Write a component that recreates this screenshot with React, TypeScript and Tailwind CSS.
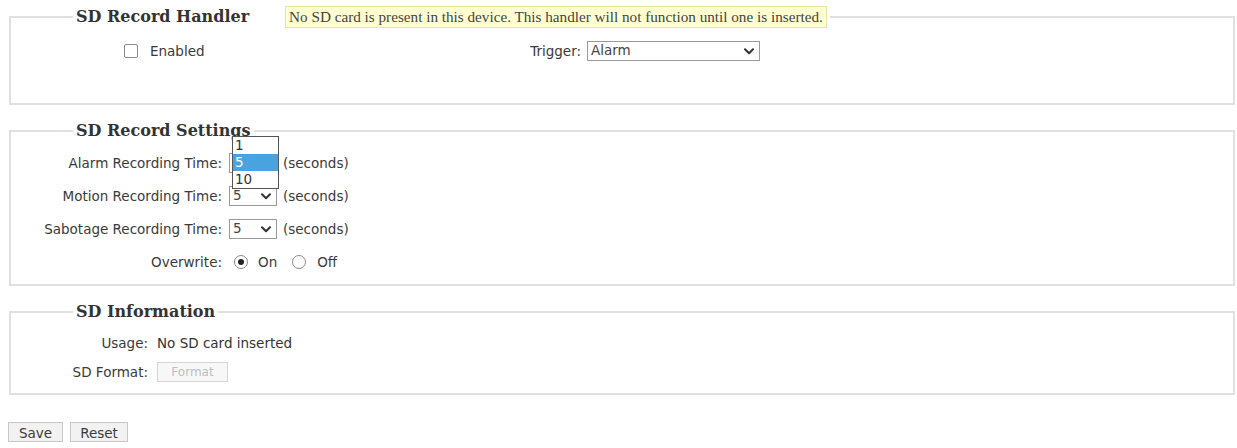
import React from "react"

const sans = "font-['DejaVu_Sans',Verdana,sans-serif]"

// little down-arrow used by the fake select boxes
const Chevron = ({ className = "" }: { className?: string }) => (
    <svg viewBox="0 0 10 7" className={className} fill="none">
        <polyline points="1,1.2 5,5.2 9,1.2" stroke="#333" strokeWidth="2" strokeLinecap="round" strokeLinejoin="round" />
    </svg>
)

const Select = ({ value, className = "", children }: { value: string; className?: string; children?: React.ReactNode }) => (
    <div className={`relative flex items-center h-[20px] border border-[#9a9a9a] bg-white pl-[3px] pr-[5px] ${className}`}>
        <span className="flex-1 leading-none text-[#444]">{value}</span>
        <Chevron className="w-[10px] h-[7px]" />
        {children}
    </div>
)

const Legend = ({ children }: { children: React.ReactNode }) => (
    <legend className="ml-[62px] px-[3px] font-['DejaVu_Serif',Georgia,serif] font-bold text-[16px] leading-[20px] text-[#333]">
        {children}
    </legend>
)

const Radio = ({ checked }: { checked?: boolean }) => (
    <span className="inline-flex items-center justify-center w-[14px] h-[14px] rounded-full border border-[#8a8a8a] bg-white">
        {checked && <span className="w-[6px] h-[6px] rounded-full bg-[#222]" />}
    </span>
)

const TimeRow = ({ label, children }: { label: string; children: React.ReactNode }) => (
    <div className="flex items-center h-[20px]">
        <span className="w-[211px] text-right text-[#3a3a3a]">{label}</span>
        {children}
    </div>
)

export default function App() {
    return (
        <div className={`w-[1237px] h-[448px] bg-white pt-[6px] pl-[8px] pr-[2px] ${sans} text-[13.5px] text-[#333]`}>
            {/* handler */}
            <fieldset className="ml-px border-2 border-[#e0e0e0]">
                <legend className="ml-[62px] px-[3px]">
                    <div className="flex items-center">
                        <span className="font-['DejaVu_Serif',Georgia,serif] font-bold text-[16px] leading-[20px] text-[#333]">
                            SD Record Handler
                        </span>
                        <span className="ml-[36px] h-[22px] px-[3px] flex items-center border border-[#e4e6a8] bg-[#ffffd0] font-['Liberation_Serif','Times_New_Roman',serif] text-[15.2px] text-[#444]">
                            No SD card is present in this device. This handler will not function until one is inserted.
                        </span>
                    </div>
                </legend>
                <div className="h-[75px] pt-[13px]">
                    <div className="flex items-center h-[20px]">
                        <div className="w-[470px] pl-[113px] flex items-center">
                            <span className="w-[14px] h-[14px] rounded-[2px] border border-[#8a8a8a] bg-white" />
                            <span className="ml-[12px] text-[#3a3a3a]">Enabled</span>
                        </div>
                        <span className="w-[106px] pr-[6px] text-right text-[#3a3a3a]">Trigger:</span>
                        <Select value="Alarm" className="w-[173px]" />
                    </div>
                </div>
            </fieldset>

            {/* recording settings */}
            <fieldset className="ml-px mt-[16px] border-2 border-[#e0e0e0]">
                <Legend>SD Record Settings</Legend>
                <div className="flex flex-col gap-[13px] pt-[12px] pb-[12px]">
                    <TimeRow label="Alarm Recording Time:">
                        <Select value="5" className="ml-[7px] w-[48px]">
                            {/* open option list */}
                            <div className="absolute left-[2px] top-[-18px] w-[47px] border border-[#555] bg-white flex flex-col z-10">
                                <span className="h-[17px] pl-[2px] leading-[17px] text-[#333]">1</span>
                                <span className="h-[17px] pl-[2px] leading-[17px] bg-[#4aa3df] text-white">5</span>
                                <span className="h-[17px] pl-[2px] leading-[17px] text-[#333]">10</span>
                            </div>
                        </Select>
                        <span className="ml-[6px] text-[#3a3a3a]">(seconds)</span>
                    </TimeRow>
                    <TimeRow label="Motion Recording Time:">
                        <Select value="5" className="ml-[7px] w-[48px]" />
                        <span className="ml-[6px] text-[#3a3a3a]">(seconds)</span>
                    </TimeRow>
                    <TimeRow label="Sabotage Recording Time:">
                        <Select value="5" className="ml-[7px] w-[48px]" />
                        <span className="ml-[6px] text-[#3a3a3a]">(seconds)</span>
                    </TimeRow>
                    <TimeRow label="Overwrite:">
                        <span className="ml-[12px] flex items-center">
                            <Radio checked />
                        </span>
                        <span className="ml-[10px] text-[#3a3a3a]">On</span>
                        <span className="ml-[15px] flex items-center">
                            <Radio />
                        </span>
                        <span className="ml-[11px] text-[#3a3a3a]">Off</span>
                    </TimeRow>
                </div>
            </fieldset>

            {/* card info */}
            <fieldset className="ml-px mt-[16px] border-2 border-[#e0e0e0]">
                <Legend>SD Information</Legend>
                <div className="flex flex-col gap-[9px] pt-[11px] pb-[11px]">
                    <div className="flex items-center h-[20px]">
                        <span className="w-[137px] text-right text-[#3a3a3a]">Usage:</span>
                        <span className="ml-[9px] text-[#333]">No SD card inserted</span>
                    </div>
                    <div className="flex items-center h-[20px]">
                        <span className="w-[137px] text-right text-[#3a3a3a]">SD Format:</span>
                        <button className="ml-[9px] w-[71px] h-[20px] border border-[#d6d6d6] bg-[#f7f7f7] text-[12px] text-[#bdbdbd]" disabled>
                            Format
                        </button>
                    </div>
                </div>
            </fieldset>

            <div className="flex gap-[7px] mt-[27px]">
                <button className="w-[55px] h-[20px] border border-[#c8c8c8] bg-[#f2f2f2] text-[#3a3a3a]">Save</button>
                <button className="w-[58px] h-[20px] border border-[#c8c8c8] bg-[#f2f2f2] text-[#3a3a3a]">Reset</button>
            </div>
        </div>
    )
}
